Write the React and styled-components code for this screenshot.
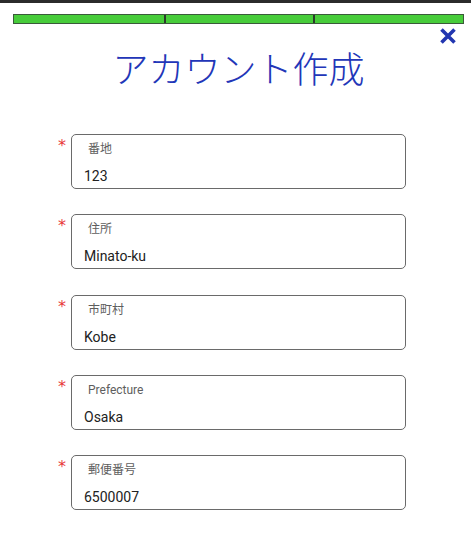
import React from "react";
import styled, { createGlobalStyle } from "styled-components";

const Global = createGlobalStyle`
  html, body { margin: 0; padding: 0; background: #fff; }
  body { font-family: Roboto, "Noto Sans CJK JP", sans-serif; }
`;

const TopStrip = styled.div`
  height: 3px;
  background: #2b2b2b;
`;

const Page = styled.div`
  padding: 11px 7px 0 13px;
`;

const Progress = styled.div`
  display: grid;
  grid-template-columns: repeat(3, 1fr);
  height: 10px;
  box-sizing: border-box;
  border: 1px solid #3a5a3a;
  background: #47cc3a;
`;

const Segment = styled.div`
  border-left: ${(p) => (p.$first ? "none" : "2px solid #2a3a2a")};
`;

const CloseRow = styled.div`
  display: flex;
  justify-content: flex-end;
  padding-right: 7px;
  height: 22px;
  align-items: center;
  margin-top: 1px;
`;

const Title = styled.h1`
  margin: 0;
  text-align: center;
  font-family: "Noto Sans CJK JP", sans-serif;
  font-weight: 300;
  font-size: 36px;
  line-height: 44px;
  color: #2236b8;
  margin-top: -2px;
`;

const Form = styled.div`
  display: flex;
  flex-direction: column;
  gap: 25.3px;
  padding: 45px 0 0 45px;
`;

const Row = styled.div`
  display: flex;
  align-items: flex-start;
`;

const Star = styled.span`
  width: 13px;
  font-size: 16px;
  line-height: 16px;
  color: #e8393a;
  font-family: "DejaVu Sans", sans-serif;
  margin-top: 4px;
`;

const Box = styled.div`
  width: 335px;
  height: 55px;
  box-sizing: border-box;
  border: 1px solid #6a6a6a;
  border-radius: 5px;
  padding: 6px 12px 0 12px;
  display: flex;
  flex-direction: column;
`;

const Label = styled.span`
  font-size: 12px;
  line-height: 16px;
  color: #5e5e5e;
  padding-left: 4px;
  font-family: Roboto, "Noto Sans CJK JP", sans-serif;
`;

const Value = styled.span`
  font-size: 14px;
  line-height: 18px;
  margin-top: 10px;
  color: #222;
  font-family: Roboto, sans-serif;
`;

const fields = [
  ["番地", "123"],
  ["住所", "Minato-ku"],
  ["市町村", "Kobe"],
  ["Prefecture", "Osaka"],
  ["郵便番号", "6500007"],
];

export default function App() {
  return (
    <>
      <Global />
      <TopStrip />
      <Page>
        <Progress>
          <Segment $first />
          <Segment />
          <Segment />
        </Progress>
        <CloseRow>
          <svg width="18" height="18" viewBox="0 0 18 18">
            <path d="M2.5 2.5 L15.5 15.5 M15.5 2.5 L2.5 15.5" stroke="#2236b0" strokeWidth="3.6" strokeLinecap="butt" />
          </svg>
        </CloseRow>
        <Title>アカウント作成</Title>
        <Form>
          {fields.map(([l, v]) => (
            <Row key={l}>
              <Star>*</Star>
              <Box>
                <Label>{l}</Label>
                <Value>{v}</Value>
              </Box>
            </Row>
          ))}
        </Form>
      </Page>
    </>
  );
}
